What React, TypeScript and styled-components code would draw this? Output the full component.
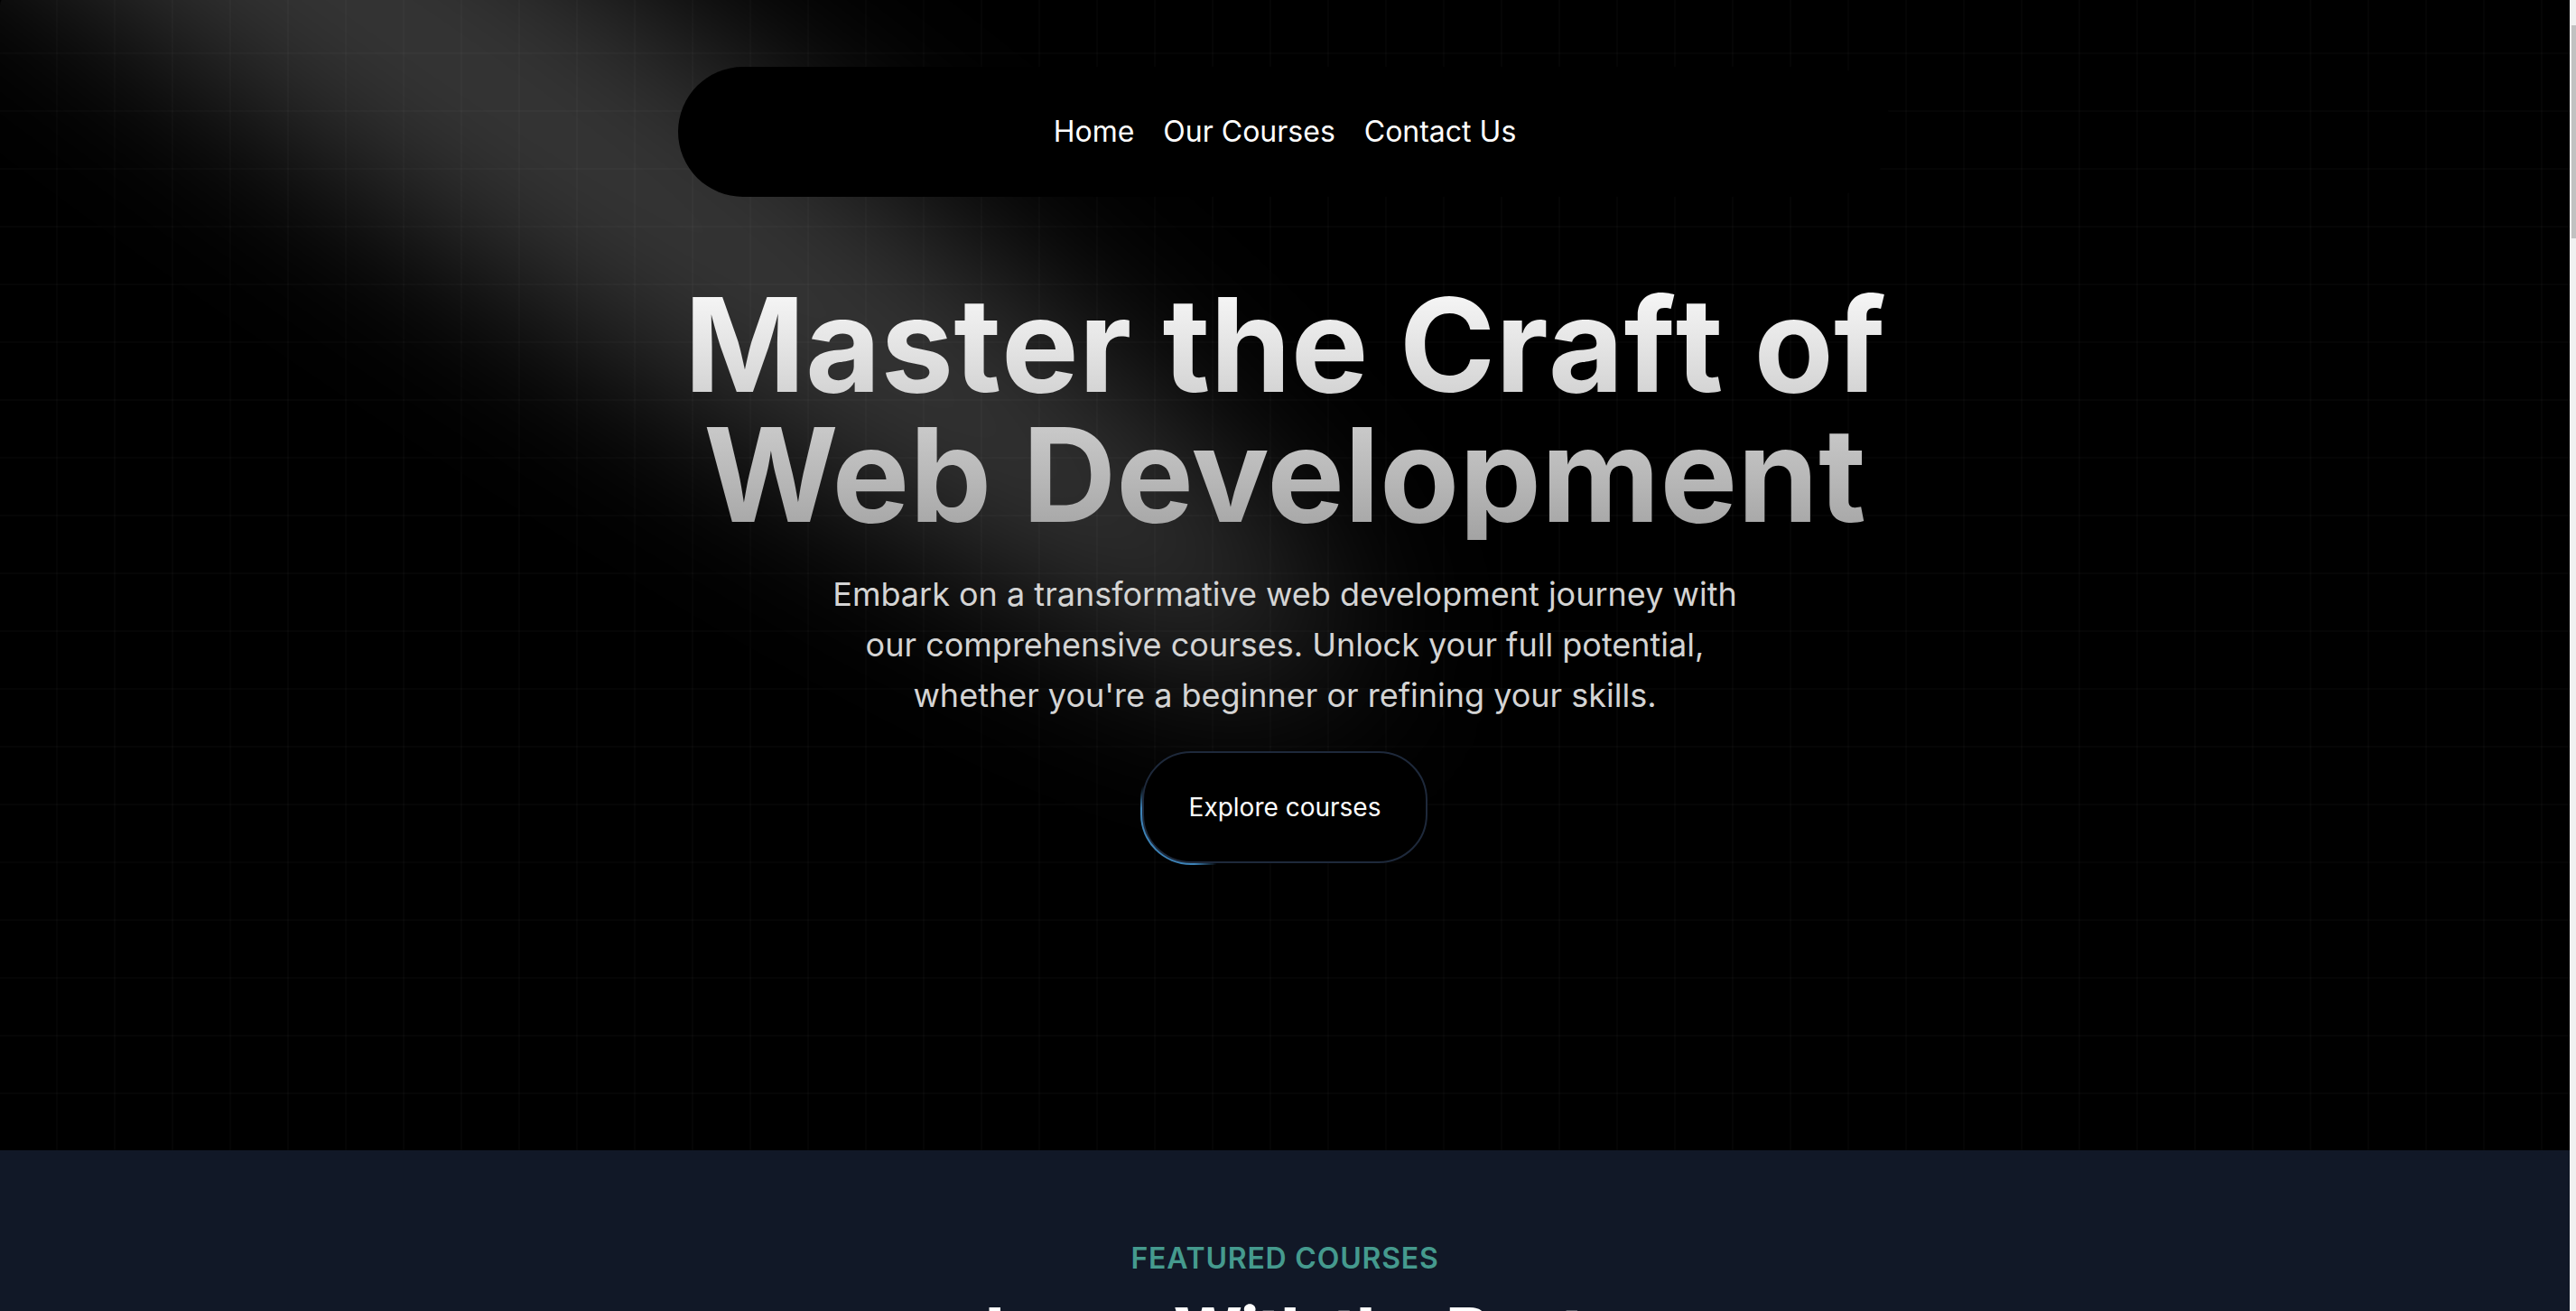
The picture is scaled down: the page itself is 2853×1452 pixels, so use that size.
import React from "react";
import styled, { createGlobalStyle } from "styled-components";

const GlobalStyle = createGlobalStyle`
  *, *::before, *::after { box-sizing: border-box; }
  body {
    margin: 0;
    background: #000;
    color: #fff;
    font-family: Inter, "Liberation Sans", sans-serif;
  }
  h1, h2, p { margin: 0; }
`;

const Viewport = styled.div`
  display: flex;
  height: 100vh;
  overflow: hidden;
`;

const Page = styled.main`
  flex: 1;
  min-width: 0;
`;

const Hero = styled.section`
  position: relative;
  display: flex;
  flex-direction: column;
  align-items: center;
  gap: 92px;
  min-height: 1280px;
  margin-top: -6px;
  padding: 80px 32px 0;
  border-radius: 12px;
  overflow: hidden;
  background:
    linear-gradient(rgba(255, 255, 255, 0.02) 2px, transparent 2px) 0 0 / 64px 64px,
    linear-gradient(to right, transparent 62px, rgba(255, 255, 255, 0.02) 62px) 0 0 / 64px 64px,
    #000;
`;

const SpotlightSvg = styled.svg`
  position: absolute;
  top: -160px;
  left: 480px;
  width: 84%;
  height: 169%;
  transform: translate(-50%, -40%);
  pointer-events: none;
`;

const NavBar = styled.nav`
  position: relative;
  display: flex;
  justify-content: center;
  gap: 32px;
  width: 100%;
  max-width: 1344px;
  padding: 48px 64px;
  border-radius: 72px;
  background: #000;
`;

const NavLink = styled.a`
  color: #fff;
  font-size: 32px;
  line-height: 48px;
  text-decoration: none;
`;

const Intro = styled.div`
  position: relative;
  display: flex;
  flex-direction: column;
  align-items: center;
  gap: 32px;
  text-align: center;
`;

const Title = styled.h1`
  max-width: 1400px;
  font-size: 144px;
  line-height: 144px;
  font-weight: 700;
  color: transparent;
  background: linear-gradient(to bottom, #fafafa, #a3a3a3);
  -webkit-background-clip: text;
  background-clip: text;
`;

/* Keeps the f and t of "Craft" from running into each other. */
const OpenPairs = styled.span`
  font-kerning: none;
`;

const Lead = styled.p`
  max-width: 1024px;
  color: #d4d4d4;
  font-size: 36px;
  line-height: 56px;
`;

const GlowButton = styled.button`
  width: 320px;
  height: 128px;
  padding: 2px;
  border: 0;
  border-radius: 56px;
  background: radial-gradient(
    circle at 20px 106px,
    rgba(71, 153, 214, 0.85) 45px,
    transparent 68px
  );
  font-family: inherit;
  cursor: pointer;
`;

const GlowButtonFace = styled.span`
  display: flex;
  align-items: center;
  justify-content: center;
  height: 100%;
  border: 2px solid #1e293b;
  border-radius: 54px;
  background: #000;
  color: #fff;
  font-size: 28px;
  line-height: 40px;
`;

const Featured = styled.section`
  display: flex;
  flex-direction: column;
  gap: 16px;
  padding: 96px 32px;
  background: #111827;
  text-align: center;
`;

const Eyebrow = styled.h2`
  color: #459a8e;
  font-size: 32px;
  line-height: 48px;
  font-weight: 600;
  letter-spacing: 0.025em;
  text-transform: uppercase;
`;

const FeaturedTitle = styled.p`
  font-size: 72px;
  line-height: 80px;
  font-weight: 800;
  letter-spacing: -0.025em;
`;

const ScrollTrack = styled.div`
  width: 7px;
  padding: 28px 0 0 2px;
  background: #f0f0f0;
`;

const ScrollThumb = styled.div`
  height: 236px;
  background: #c1c1c1;
`;

const links = ["Home", "Our Courses", "Contact Us"];

function Spotlight() {
  return (
    <SpotlightSvg viewBox="0 0 3787 2842" fill="none" aria-hidden="true">
      <g filter="url(#spotlight-blur)">
        <ellipse
          cx="1924.71"
          cy="273.501"
          rx="1924.71"
          ry="273.501"
          transform="matrix(-0.822377 -0.568943 -0.568943 0.822377 3631.88 2291.09)"
          fill="white"
          fillOpacity="0.21"
        />
      </g>
      <defs>
        <filter
          id="spotlight-blur"
          x="0.860352"
          y="0.838989"
          width="3785.16"
          height="2840.26"
          filterUnits="userSpaceOnUse"
          colorInterpolationFilters="sRGB"
        >
          <feGaussianBlur stdDeviation="151" />
        </filter>
      </defs>
    </SpotlightSvg>
  );
}

export default function App() {
  return (
    <Viewport>
      <GlobalStyle />
      <Page>
        <Hero>
          <Spotlight />
          <NavBar>
            {links.map((label) => (
              <NavLink key={label} href="#">
                {label}
              </NavLink>
            ))}
          </NavBar>
          <Intro>
            <Title>
              <OpenPairs>Master the Craft of</OpenPairs> Web Development
            </Title>
            <Lead>
              Embark on a transformative web development journey with our
              comprehensive courses. Unlock your full potential, whether you're
              a beginner or refining your skills.
            </Lead>
            <GlowButton type="button">
              <GlowButtonFace>Explore courses</GlowButtonFace>
            </GlowButton>
          </Intro>
        </Hero>
        <Featured>
          <Eyebrow>Featured Courses</Eyebrow>
          <FeaturedTitle>Learn With the Best</FeaturedTitle>
        </Featured>
      </Page>
      <ScrollTrack aria-hidden="true">
        <ScrollThumb />
      </ScrollTrack>
    </Viewport>
  );
}
